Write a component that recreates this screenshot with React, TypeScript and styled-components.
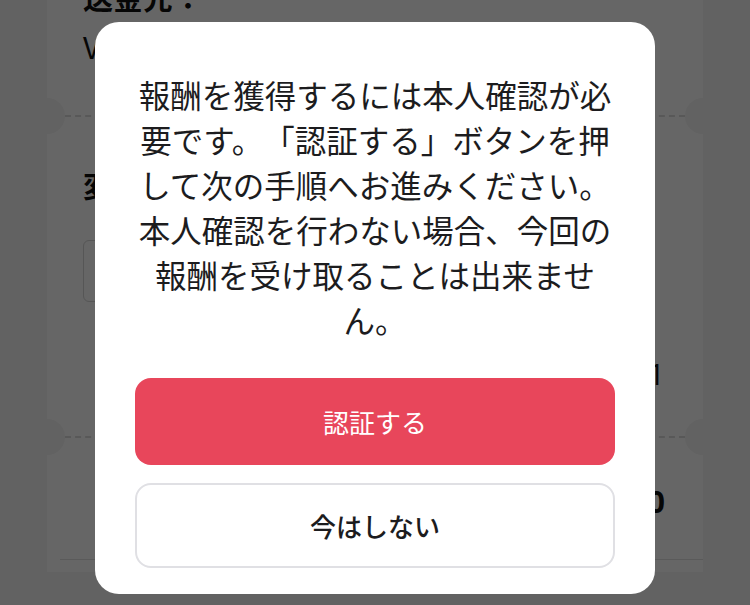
import React from "react";
import styled, { createGlobalStyle } from "styled-components";

const GlobalStyle = createGlobalStyle`
  html, body {
    margin: 0;
    padding: 0;
    background: #f5f5f5;
    font-family: "Noto Sans CJK JP", "Noto Sans", sans-serif;
    color: #111;
  }
  * { box-sizing: border-box; }
`;

const Page = styled.div`
  height: 605px;
  overflow: hidden;
  padding: 0 47px;
`;

const Card = styled.div`
  margin-top: -26px;
  width: 656px;
  height: 598px;
  background: #fff;
  display: flex;
  flex-direction: column;
`;

const Section = styled.div<{ $top?: number }>`
  padding: ${(p) => p.$top || 0}px 38px 0 36px;
  display: flex;
  flex-direction: column;
`;

const Heading = styled.div`
  font-size: 30px;
  font-weight: 700;
  line-height: 44px;
`;

const Value = styled.div`
  font-size: 30px;
  line-height: 44px;
  margin-top: 6px;
`;

const Divider = styled.div<{ $space: number }>`
  position: relative;
  height: 36px;
  margin-top: ${(p) => p.$space}px;
  display: flex;
  align-items: center;

  &::before {
    content: "";
    flex: 1;
    margin: 0 18px;
    border-top: 2px dashed #dcdcdc;
  }
`;

const Notch = styled.span<{ $side: "left" | "right" }>`
  position: absolute;
  top: 0;
  ${(p) => p.$side}: -18px;
  width: 36px;
  height: 36px;
  border-radius: 50%;
  background: #f5f5f5;
`;

const Input = styled.div`
  margin-top: 34px;
  width: 420px;
  height: 62px;
  border: 1px solid #d6d6d6;
  border-radius: 6px;
`;

const Row = styled.div<{ $bold?: boolean; $top: number }>`
  display: flex;
  justify-content: flex-end;
  align-items: center;
  margin-top: ${(p) => p.$top}px;
  height: 44px;
  font-size: 30px;
  font-weight: ${(p) => (p.$bold ? 700 : 400)};
  font-family: "Open Sans", "Noto Sans CJK JP", sans-serif;
`;

const Footer = styled.div`
  margin: auto 0 12px 13px;
  border-top: 1px solid #e2e2e2;
`;

const Overlay = styled.div`
  position: fixed;
  inset: 0;
  background: rgba(0, 0, 0, 0.6);
  display: flex;
  justify-content: center;
  align-items: flex-start;
  padding-top: 22px;
`;

const Modal = styled.div`
  width: 560px;
  background: #fff;
  border-radius: 24px;
  padding: 50px 40px 26px;
  display: flex;
  flex-direction: column;
`;

const Message = styled.p`
  margin: 0;
  font-size: 31.5px;
  line-height: 45px;
  text-align: center;
  color: #1c1c1e;
  line-break: strict;
  text-spacing-trim: space-all;
`;

const Button = styled.button<{ $primary?: boolean }>`
  width: 100%;
  height: ${(p) => (p.$primary ? "87px" : "85px")};
  border-radius: 16px;
  border: ${(p) => (p.$primary ? "none" : "2px solid #e0e0e4")};
  background: ${(p) => (p.$primary ? "#e8465b" : "#fff")};
  color: ${(p) => (p.$primary ? "#fff" : "#1c1c1e")};
  font-family: "Noto Sans CJK JP", sans-serif;
  font-size: 26px;
  font-weight: ${(p) => (p.$primary ? 400 : 500)};
  cursor: pointer;
  & + & {
    margin-top: 18px;
  }
`;

const Actions = styled.div`
  margin-top: 36px;
  display: flex;
  flex-direction: column;
`;

export default function App() {
  return (
    <>
      <GlobalStyle />
      <Page>
        <Card>
          <Section>
            <Heading>送金先：</Heading>
            <Value>VISA ****1234</Value>
          </Section>
          <Divider $space={30}>
            <Notch $side="left" />
            <Notch $side="right" />
          </Divider>
          <Section $top={28}>
            <Heading>変更金額</Heading>
            <Input />
            <Row $top={49}>¥1</Row>
          </Section>
          <Divider $space={24}>
            <Notch $side="left" />
            <Notch $side="right" />
          </Divider>
          <Section $top={24}>
            <Row $bold $top={0}>¥100</Row>
          </Section>
          <Footer />
        </Card>
      </Page>
      <Overlay>
        <Modal>
          <Message>
            報酬を獲得するには本人確認が必要です。「認証する」ボタンを押して次の手順へお進みください。本人確認を行わない場合、今回の報酬を受け取ることは出来ません。
          </Message>
          <Actions>
            <Button $primary>認証する</Button>
            <Button>今はしない</Button>
          </Actions>
        </Modal>
      </Overlay>
    </>
  );
}
